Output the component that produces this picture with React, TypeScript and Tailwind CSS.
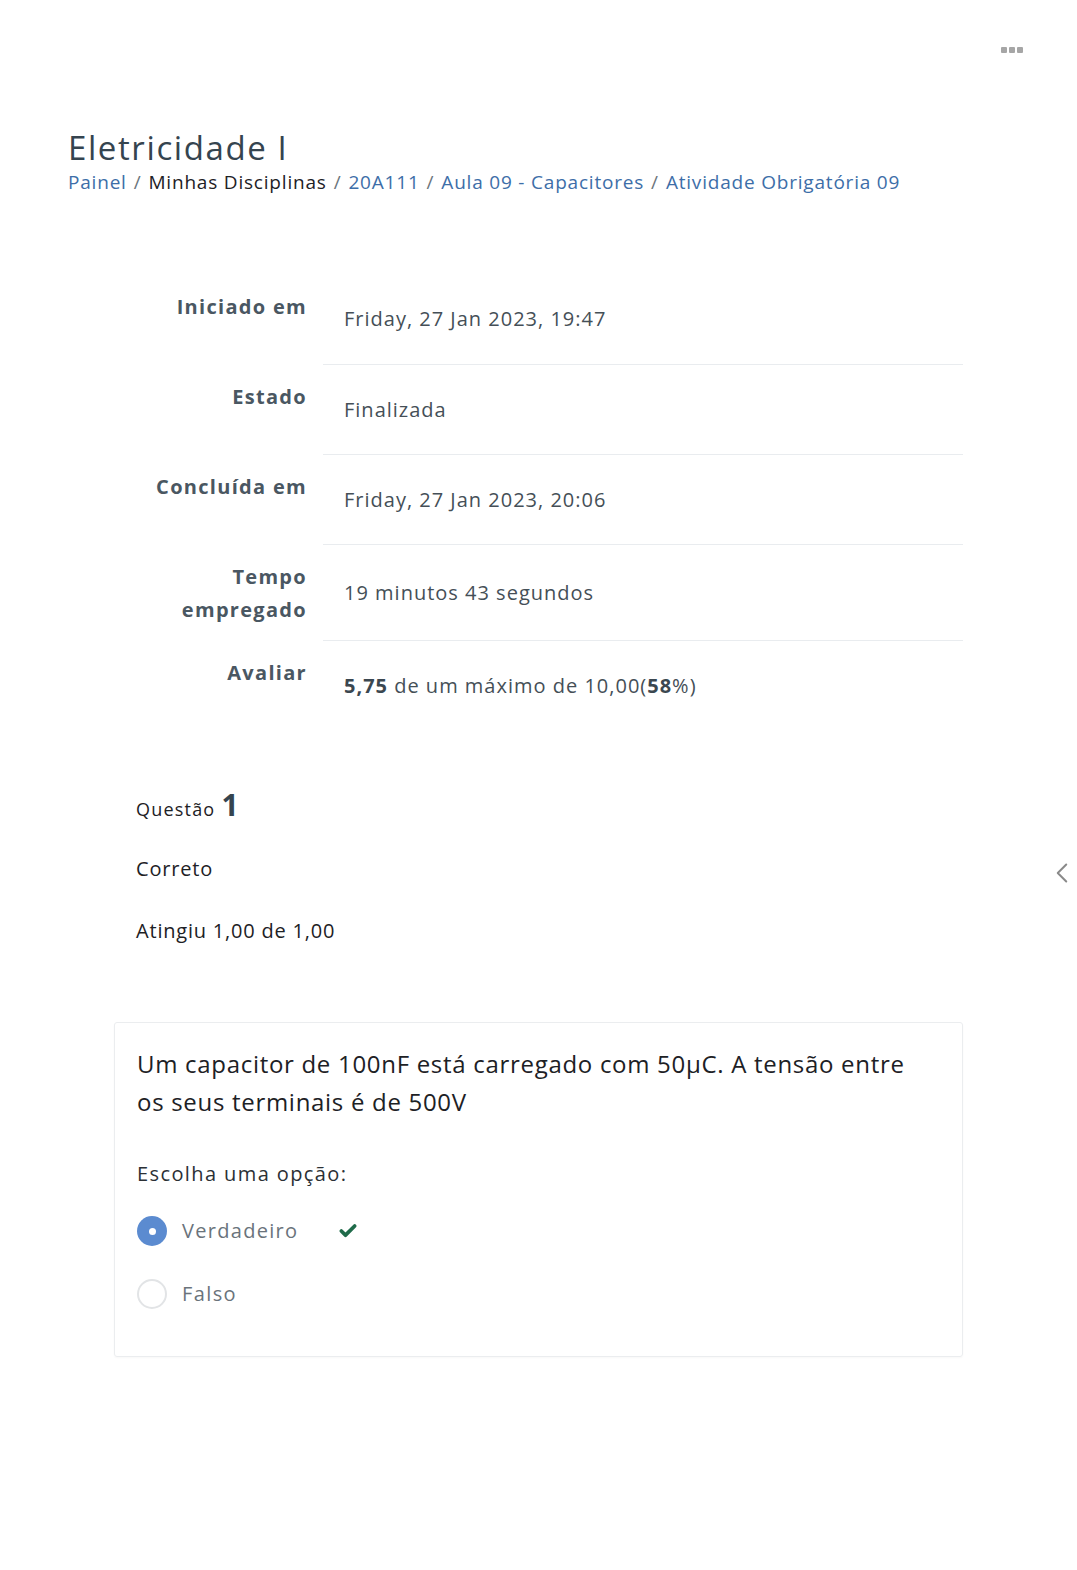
import { Check, ChevronLeft } from "lucide-react";

const rows = [
  { label: ["Iniciado em"], value: "Friday, 27 Jan 2023, 19:47" },
  { label: ["Estado"], value: "Finalizada" },
  { label: ["Concluída em"], value: "Friday, 27 Jan 2023, 20:06" },
  { label: ["Tempo", "empregado"], value: "19 minutos 43 segundos" },
];

const crumbs = [
  { text: "Painel", link: true },
  { text: "Minhas Disciplinas", link: false },
  { text: "20A111", link: true },
  { text: "Aula 09 - Capacitores", link: true },
  { text: "Atividade Obrigatória 09", link: true },
];

export default function App() {
  return (
    <div
      className="relative min-h-[1570px] w-full bg-white text-[#343a40]"
      style={{ fontFamily: '"Open Sans", "Noto Sans", sans-serif' }}
    >
      {/* top-right menu */}
      <div className="flex justify-end pt-[47px] pr-[54px]">
        <div className="flex gap-[2px]">
          <span className="h-[6px] w-[6px] rounded-[1px] bg-[#a6a6a6]" />
          <span className="h-[6px] w-[6px] rounded-[1px] bg-[#a6a6a6]" />
          <span className="h-[6px] w-[6px] rounded-[1px] bg-[#a6a6a6]" />
        </div>
      </div>

      <div className="pl-[68px] pt-[75px]">
        <h1 className="text-[33px] leading-[40px] tracking-[1.6px] text-[#35444f]">Eletricidade I</h1>
        <nav className="mt-[1px] flex items-center text-[19px] leading-[26px] tracking-[0.8px]">
          {crumbs.map((c, i) => (
            <span key={i} className="flex items-center">
              {i > 0 && <span className="px-[7px] text-[#6c757d]">/</span>}
              <span className={c.link ? "text-[#3d6ea8]" : "text-[#1d2125]"}>{c.text}</span>
            </span>
          ))}
        </nav>
      </div>

      {/* summary table */}
      <div className="ml-[136px] mr-[114px] mt-[79px]">
        {rows.map((r, i) => (
          <div key={i} className="flex">
            <div className="w-[171px] shrink-0 pt-[16px] text-right text-[20px] font-bold leading-[33px] tracking-[1.3px] text-[#4a5762]">
              {r.label.map((l) => (
                <div key={l}>{l}</div>
              ))}
            </div>
            <div
              className={
                "ml-[16px] flex flex-1 items-center px-[21px] text-[20px] tracking-[1px] text-[#454f57] " +
                (i === 0 ? "h-[90px]" : i === 3 ? "h-[96px] border-t border-[#e9ecef]" : "h-[90px] border-t border-[#e9ecef]")
              }
            >
              {r.value}
            </div>
          </div>
        ))}
        <div className="flex">
          <div className="w-[171px] shrink-0 pt-[16px] text-right text-[20px] font-bold leading-[33px] tracking-[1.3px] text-[#4a5762]">
            Avaliar
          </div>
          <div className="ml-[16px] flex h-[90px] flex-1 items-center border-t border-[#e9ecef] px-[21px] text-[20px] tracking-[1px] text-[#454f57]">
            <span>
              <b className="text-[#3b4750]">5,75</b> de um máximo de 10,00(<b className="text-[#3b4750]">58</b>%)
            </span>
          </div>
        </div>
      </div>

      {/* question info */}
      <div className="ml-[136px] mt-[60px] text-[#1d2125]">
        <div className="flex items-baseline text-[18px] tracking-[1.2px]">
          Questão <span className="ml-[6px] text-[30px] font-bold leading-none text-[#35444f]">1</span>
        </div>
        <div className="mt-[31px] text-[20px] tracking-[0.8px]">Correto</div>
        <div className="mt-[32px] text-[20px] tracking-[0.8px]">Atingiu 1,00 de 1,00</div>
      </div>

      {/* question card */}
      <div className="ml-[114px] mr-[114px] mt-[76px] rounded-[3px] border border-[#ebedef] px-[22px] pt-[22px] pb-[47px] shadow-[0_1px_2px_rgba(0,0,0,0.03)]">
        <p className="text-[24px] leading-[38px] tracking-[0.7px] text-[#1d2125]">
          Um capacitor de 100nF está carregado com 50µC. A tensão entre
          <br />
          os seus terminais é de 500V
        </p>
        <div className="mt-[38px] text-[20px] tracking-[1.4px] text-[#2b3035]">Escolha uma opção:</div>
        <div className="mt-[27px] flex items-center">
          <span className="flex h-[30px] w-[30px] items-center justify-center rounded-full bg-[#5b8bd0]">
            <span className="h-[7px] w-[7px] rounded-full bg-white" />
          </span>
          <span className="ml-[15px] text-[20px] tracking-[1.3px] text-[#6a737b]">Verdadeiro</span>
          <Check className="ml-[40px] text-[#1f6b4a]" size={20} strokeWidth={4.5} />
        </div>
        <div className="mt-[33px] flex items-center">
          <span className="h-[30px] w-[30px] rounded-full border-2 border-[#e2e4e6]" />
          <span className="ml-[15px] text-[20px] tracking-[1.4px] text-[#6a737b]">Falso</span>
        </div>
      </div>

      <ChevronLeft className="absolute left-[1045px] top-[856px] text-[#8a8a8a]" size={34} strokeWidth={1.4} />
    </div>
  );
}
